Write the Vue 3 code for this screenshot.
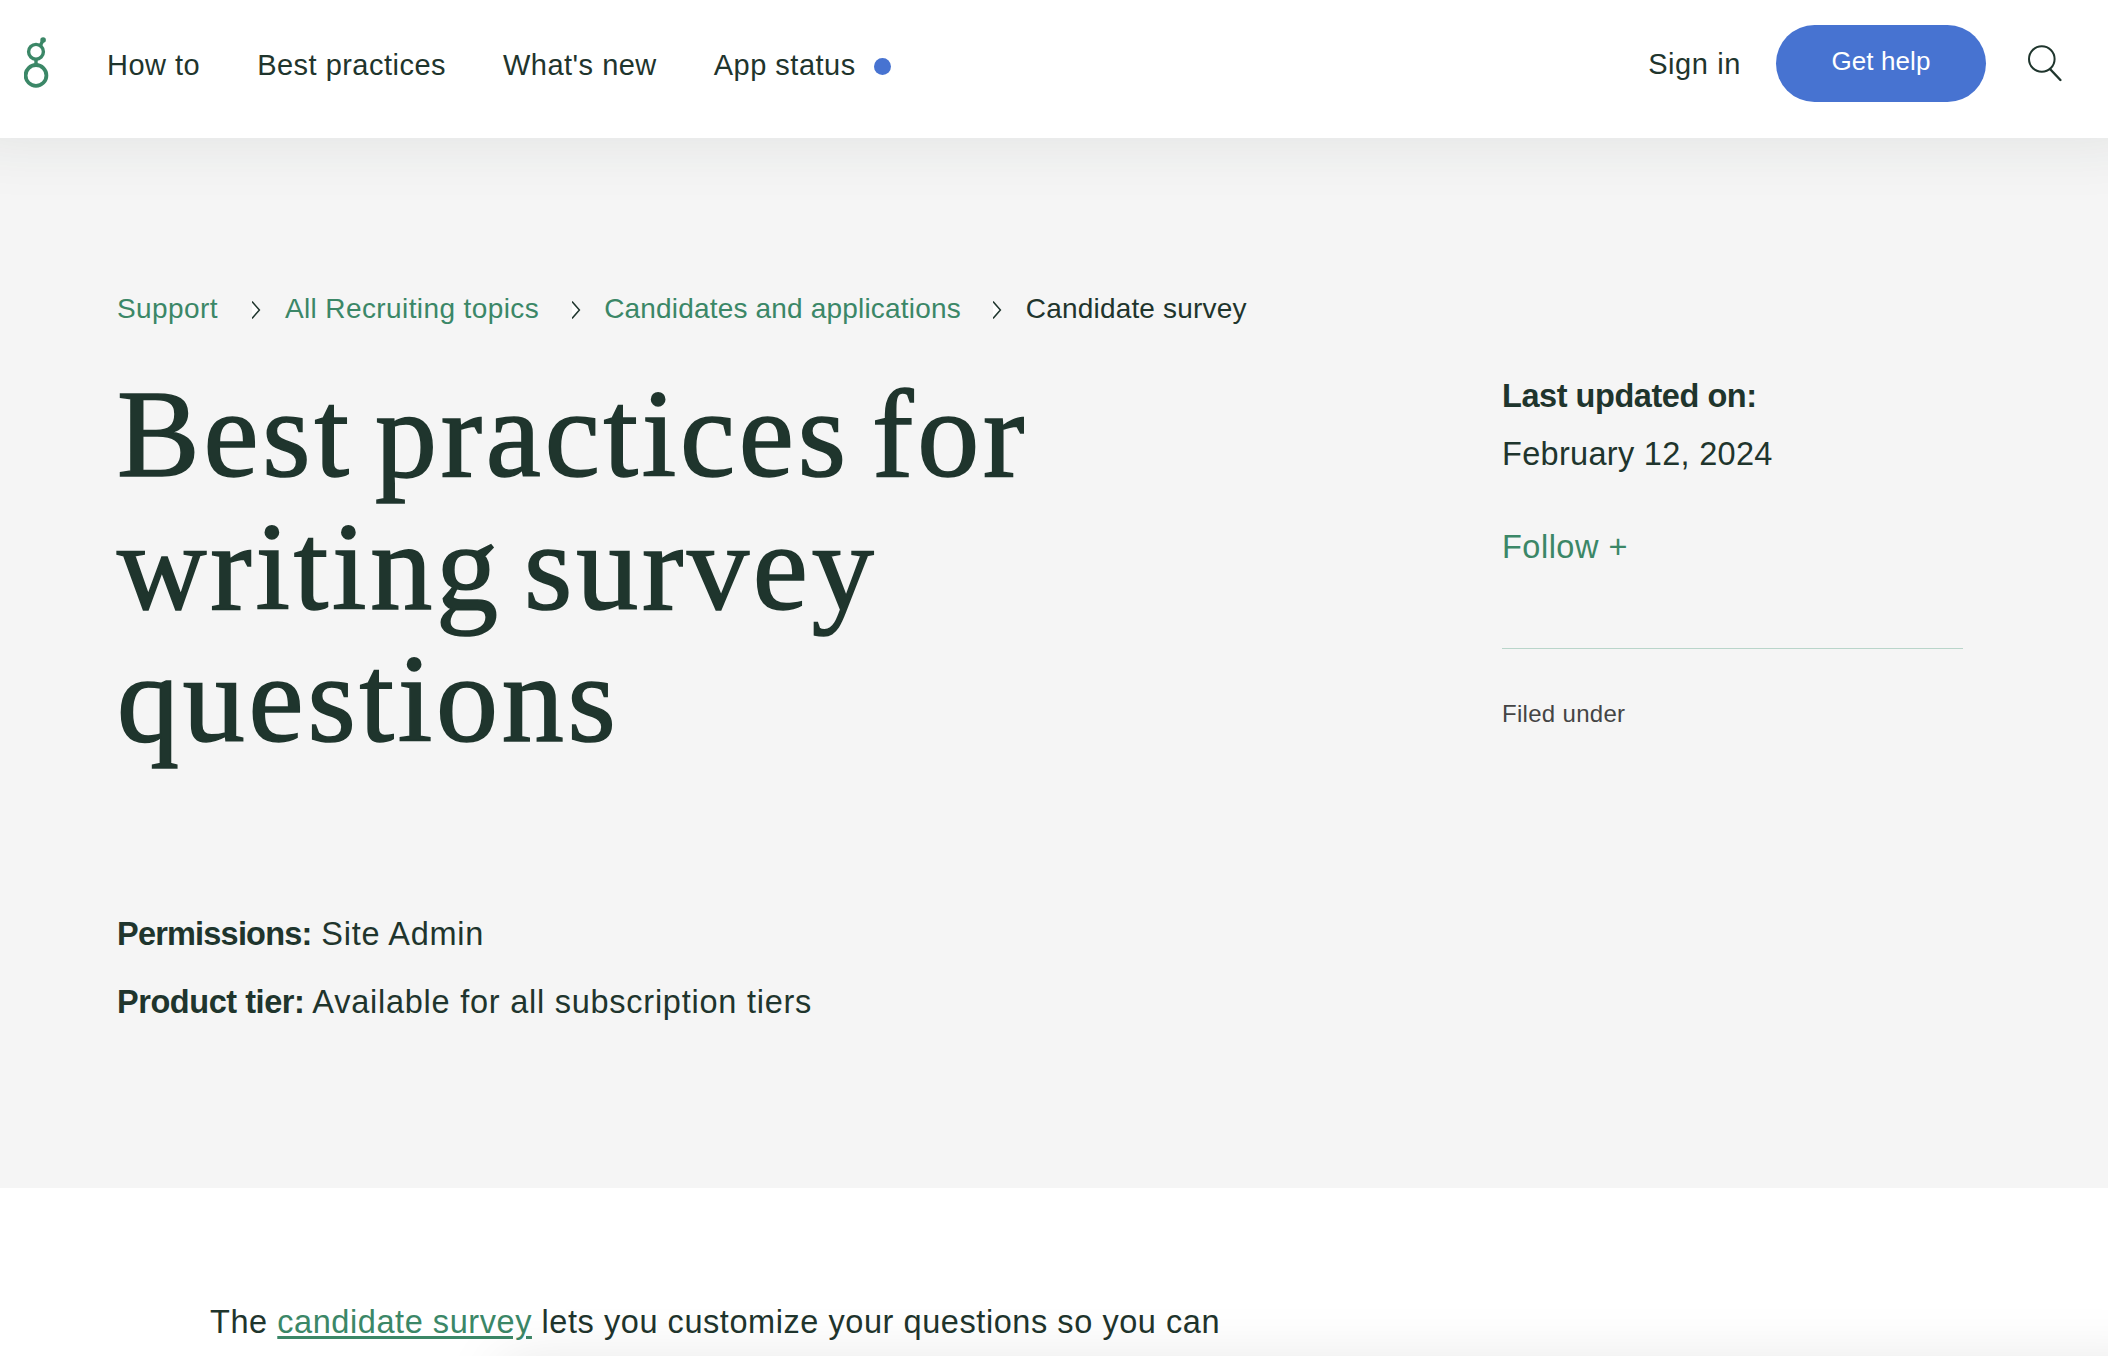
<template>
  <div class="page">
    <header class="header">
      <a class="logo" href="#" aria-label="Home">
        <svg width="26" height="52" viewBox="0 0 26 52" fill="none">
          <circle cx="12" cy="14.8" r="7.4" stroke="#3b8767" stroke-width="3.4" />
          <circle cx="12" cy="38.4" r="10.4" stroke="#3b8767" stroke-width="3.8" />
          <path d="M16.4 8.6L18.6 4M12 22.5V28" stroke="#3b8767" stroke-width="3.4" />
          <circle cx="19.1" cy="3" r="2.8" fill="#3b8767" />
        </svg>
      </a>
      <nav class="nav">
        <a v-for="item in navItems" :key="item" class="nav-link" href="#">{{ item }}</a>
        <span class="status-dot"></span>
      </nav>
      <div class="actions">
        <a class="sign-in" href="#">Sign in</a>
        <button class="help-button">Get help</button>
        <button class="search-button" aria-label="Search">
          <svg width="36" height="40" viewBox="0 0 36 40" fill="none" stroke="#1f352d">
            <circle cx="15.8" cy="15" r="12.8" stroke-width="2" />
            <path d="M24 25L34.4 36" stroke-width="2.4" stroke-linecap="round" />
          </svg>
        </button>
      </div>
    </header>

    <section class="hero">
      <div class="hero-main">
        <ol class="breadcrumbs">
          <li v-for="(crumb, index) in breadcrumbs" :key="crumb" class="crumb">
            <svg v-if="index > 0" class="chevron" width="9" height="20" viewBox="0 0 9 20">
              <path d="M0 1.5L7.4 10L0 18.5Z" fill="#fff" />
              <path d="M0 1.5L7.4 10L0 18.5" fill="none" stroke="#1f352d" stroke-width="1.5" />
            </svg>
            <a v-if="index < breadcrumbs.length - 1" class="crumb-link" href="#">{{ crumb }}</a>
            <span v-else>{{ crumb }}</span>
          </li>
        </ol>
        <h1 class="title">Best practices for writing survey questions</h1>
        <p class="meta permissions"><strong>Permissions:</strong> Site Admin</p>
        <p class="meta"><strong>Product tier:</strong> Available for all subscription tiers</p>
      </div>
      <aside class="hero-aside">
        <strong class="updated-label">Last updated on:</strong>
        <span class="updated-date">February 12, 2024</span>
        <a class="follow" href="#">Follow +</a>
        <div class="filed">Filed under</div>
      </aside>
    </section>

    <main class="article">
      <p>The <a class="article-link" href="#">candidate survey</a> lets you customize your questions so you can</p>
    </main>
    <div class="bottom-panel"></div>
  </div>
</template>

<script setup>
const navItems = ["How to", "Best practices", "What's new", "App status"];

const breadcrumbs = [
  "Support",
  "All Recruiting topics",
  "Candidates and applications",
  "Candidate survey",
];
</script>

<style>
body {
  margin: 0;
  overflow: hidden;
}
</style>

<style scoped>
.page {
  height: 1356px;
  overflow: hidden;
  background: #fff;
  color: #1f352d;
  font-family: "Liberation Sans", Arial, sans-serif;
}

a {
  color: inherit;
  text-decoration: none;
}

.header {
  position: relative;
  display: flex;
  align-items: flex-start;
  height: 138px;
  box-sizing: border-box;
  padding: 0 46px 0 24px;
  background: #fff;
  box-shadow: 0 -36px 60px 40px rgba(31, 53, 45, 0.09);
}

.logo {
  width: 83px;
  padding-top: 37px;
}

.logo svg {
  display: block;
}

.nav {
  display: flex;
  gap: 57px;
  padding-top: 45px;
  font-size: 29px;
  line-height: 40px;
  letter-spacing: 0.48px;
}

.status-dot {
  width: 17px;
  height: 17px;
  margin: 13px 0 0 -39px;
  border-radius: 50%;
  background: #4773d1;
}

.actions {
  display: flex;
  margin-left: auto;
}

.sign-in {
  margin-right: 35px;
  padding-top: 44px;
  font-size: 29px;
  line-height: 40px;
  letter-spacing: 0.6px;
}

.help-button {
  width: 210px;
  height: 77px;
  margin-top: 25px;
  padding: 0 0 4px;
  border: none;
  border-radius: 39px;
  background: #4773d1;
  color: #fff;
  font-family: inherit;
  font-size: 26px;
  letter-spacing: 0.1px;
}

.search-button {
  align-self: flex-start;
  margin: 44px 0 0 40px;
  padding: 0;
  border: none;
  background: none;
}

.search-button svg {
  display: block;
}

.hero {
  display: grid;
  grid-template-columns: 1385px 461px;
  height: 1050px;
  box-sizing: border-box;
  padding: 149px 0 0 117px;
  background: #f5f5f5;
}

.breadcrumbs {
  display: flex;
  margin: 0;
  padding: 0;
  list-style: none;
  font-size: 28px;
  line-height: 44px;
  letter-spacing: 0.18px;
}

.crumb {
  display: flex;
}

.crumb:nth-child(-n + 2) {
  letter-spacing: 0.4px;
}

.chevron {
  margin: 13px 23.5px 0 34.5px;
}

.crumb:nth-child(n + 3) .chevron {
  margin-left: 32.5px;
}

.crumb-link {
  color: #3b8767;
}

.title {
  width: 1000px;
  height: 398px;
  margin: 38px 0 143px;
  font-family: "Liberation Serif", "Times New Roman", serif;
  font-size: 124px;
  font-weight: 400;
  line-height: 132.7px;
  letter-spacing: 3.8px;
  word-spacing: -12.5px;
  -webkit-text-stroke: 1.6px #1f352d;
}

.meta {
  margin: 0 0 20px;
  font-size: 32.5px;
  line-height: 48px;
  letter-spacing: 0.75px;
}

.meta strong {
  letter-spacing: -0.45px;
}

.permissions strong {
  letter-spacing: -0.8px;
}

.hero-aside {
  display: flex;
  flex-direction: column;
  padding-top: 85px;
  font-size: 32.5px;
  line-height: 48px;
}

.updated-label {
  letter-spacing: -0.45px;
}

.updated-date {
  margin-top: 10px;
  letter-spacing: 0.3px;
}

.follow {
  margin-top: 45px;
  color: #3b8767;
  letter-spacing: 0.5px;
}

.filed {
  margin-top: 77px;
  padding-top: 47px;
  border-top: 1px solid #b9d5ca;
  color: #444;
  font-size: 24px;
  line-height: 36px;
  letter-spacing: 0.3px;
}

.article {
  padding: 110px 210px 0;
  font-size: 32.5px;
  line-height: 48px;
  letter-spacing: 0.56px;
}

.article p {
  margin: 0;
}

.article-link {
  color: #3b8767;
  text-decoration: underline;
  text-decoration-thickness: 3px;
  text-underline-offset: 3px;
}

/* bar docked under the fold, only its shadow shows */
.bottom-panel {
  position: fixed;
  top: 1361px;
  left: 500px;
  right: -60px;
  height: 80px;
  box-shadow: 0 0 60px rgba(0, 0, 0, 0.1);
}
</style>
